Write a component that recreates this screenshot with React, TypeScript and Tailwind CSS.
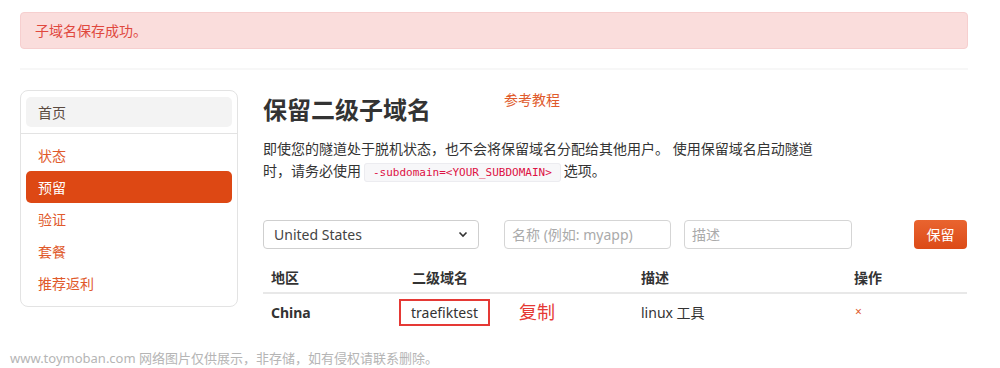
import React from 'react';

const navItems = ['状态', '预留', '验证', '套餐', '推荐返利'];

const cols = ['w-[141px]', 'w-[229px]', 'w-[213px]', 'w-[121px]'];

const App: React.FC = () => {
  return (
    <div
      className="w-[1000px] h-[368px] bg-white text-[#333] overflow-hidden"
      style={{ fontFamily: '"Noto Sans", "Noto Sans CJK SC", sans-serif' }}
    >
      <div className="ml-[20px] w-[948px] pt-3">
        {/* alert */}
        <div className="h-[37px] flex items-center px-[14px] rounded-[4px] border border-[#f6cfcf] bg-[#fadddc] text-[#e0483e] text-[14px]">
          子域名保存成功。
        </div>
        <div className="mt-[19px] h-[2px] bg-[#f7f7f7]" />

        <div className="mt-[20px] flex">
          {/* sidebar */}
          <div className="w-[218px] h-[217px] shrink-0 rounded-[8px] border border-[#e3e3e3] px-[5px] pt-[6px]">
            <div className="h-[30px] flex items-center pl-3 rounded-[5px] bg-[#f3f3f3] text-[14px] text-[#5a4a40]">首页</div>
            <div className="mt-[6px] -mx-[5px] h-px bg-[#e3e3e3]" />
            <div className="mt-[5px] flex flex-col">
              {navItems.map((item) => (
                <div
                  key={item}
                  className={
                    item === '预留'
                      ? 'h-[32px] flex items-center pl-3 rounded-[5px] bg-[#dd4814] text-white text-[14px]'
                      : 'h-[32px] flex items-center pl-3 text-[#e05a2b] text-[14px]'
                  }
                >
                  {item}
                </div>
              ))}
            </div>
          </div>

          {/* main */}
          <div className="ml-[25px] w-[705px]">
            <div className="flex items-start">
              <h1 className="mt-[2px] text-[24px] leading-[36px] font-bold text-[#333]">保留二级子域名</h1>
              <a className="ml-[73px] text-[14px] leading-[20px] text-[#e05a2b]">参考教程</a>
            </div>
            <p className="mt-[10px] text-[14px] leading-[22px] text-[#333]">
              即使您的隧道处于脱机状态，也不会将保留域名分配给其他用户。 使用保留域名启动隧道
              <br />
              时，请务必使用
              <code
                className="mx-[3px] px-[8px] py-[2px] rounded-[3px] border border-[#ececf0] bg-[#f7f7f9] text-[#dd1144] text-[11px]"
                style={{ fontFamily: '"DejaVu Sans Mono", monospace' }}
              >
                -subdomain=&lt;YOUR_SUBDOMAIN&gt;
              </code>
              选项。
            </p>

            {/* form */}
            <div className="mt-[35px] flex items-center h-[30px]">
              <div className="w-[216px] h-[29px] flex items-center justify-between px-[10px] rounded-[4px] border border-[#cfcfcf] text-[14px] text-[#444]">
                <span>United States</span>
                <svg width="10" height="10" viewBox="0 0 10 10" fill="none" stroke="#333" strokeWidth="1.6">
                  <path d="M1.5 3.5 L5 7 L8.5 3.5" />
                </svg>
              </div>
              <div className="ml-[25px] w-[167px] h-[29px] flex items-center px-[7px] rounded-[4px] border border-[#d5d5d5] text-[14px] text-[#aaa]">
                名称 (例如: myapp)
              </div>
              <div className="ml-[13px] w-[168px] h-[29px] flex items-center px-[7px] rounded-[4px] border border-[#d5d5d5] text-[14px] text-[#aaa]">
                描述
              </div>
              <button className="ml-[62px] w-[53px] h-[29px] rounded-[4px] bg-gradient-to-b from-[#e9642f] to-[#dc4a16] text-white text-[14px]">
                保留
              </button>
            </div>

            {/* table */}
            <div className="mt-[13px] w-[704px]">
              <div className="flex h-[32px] items-center border-b-2 border-[#e8e8e8] text-[14px] font-bold text-[#333]">
                {['地区', '二级域名', '描述', '操作'].map((h, i) => (
                  <div key={h} className={`${cols[i]} px-[8px]`}>{h}</div>
                ))}
              </div>
              <div className="flex h-[36px] items-center text-[14px] text-[#333]">
                <div className={`${cols[0]} px-[8px] font-bold`}>China</div>
                <div className={`${cols[1]} flex items-center`}>
                  <span className="-ml-[5px] w-[91px] h-[27px] flex items-center justify-center border-2 border-[#e53935] text-[14px]">
                    traefiktest
                  </span>
                  <span className="ml-[29px] text-[18px] text-[#e53935]">复制</span>
                </div>
                <div className={`${cols[2]} px-[8px]`}>linux 工具</div>
                <div className={`${cols[3]} px-[9px] text-[12px] text-[#e05a2b]`}>×</div>
              </div>
            </div>
          </div>
        </div>
      </div>
      <div className="mt-[19px] ml-[10px] text-[13px] text-[#b5b5b5]">
        www.toymoban.com 网络图片仅供展示，非存储，如有侵权请联系删除。
      </div>
    </div>
  );
};

export default App;
